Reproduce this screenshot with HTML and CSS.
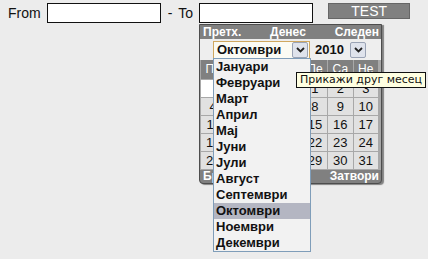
FILE: index.html
```html
<!DOCTYPE html>
<html>
<head>
    <title>Date range</title>
    <link rel="stylesheet" href="styles.css">
</head>
<body>
    <div class="range">
        <span class="lbl">From</span>
        <input type="text" class="field">
        <span class="dash">-</span>
        <span class="lbl">To</span>
        <input type="text" class="field">
        <button class="btn">TEST</button>
    </div>

    <div class="cal">
        <div class="cal-head">
            <span class="prev">Претх.</span>
            <span class="today">Денес</span>
            <span class="next">Следен</span>
        </div>
        <div class="cal-sel">
            <div class="sel sel-month">
                <span class="sel-text">Октомври</span>
                <span class="sel-arrow"><svg width="9" height="6" viewBox="0 0 9 6"><path d="M1 1l3.5 3.5L8 1" fill="none" stroke="#222" stroke-width="1.8"/></svg></span>
            </div>
            <div class="sel sel-year">
                <span class="sel-text">2010</span>
                <span class="sel-arrow"><svg width="9" height="6" viewBox="0 0 9 6"><path d="M1 1l3.5 3.5L8 1" fill="none" stroke="#222" stroke-width="1.8"/></svg></span>
            </div>
        </div>
        <div class="cal-grid">
            <div class="dn">По</div><div class="dn">Вт</div><div class="dn">Ср</div><div class="dn">Че</div><div class="dn">Пе</div><div class="dn">Са</div><div class="dn">Не</div>
            <div class="d empty"></div><div class="d empty"></div><div class="d empty"></div><div class="d empty"></div><div class="d">1</div><div class="d">2</div><div class="d">3</div>
            <div class="d">4</div><div class="d">5</div><div class="d">6</div><div class="d">7</div><div class="d">8</div><div class="d">9</div><div class="d">10</div>
            <div class="d">11</div><div class="d">12</div><div class="d">13</div><div class="d">14</div><div class="d">15</div><div class="d">16</div><div class="d">17</div>
            <div class="d">18</div><div class="d">19</div><div class="d">20</div><div class="d">21</div><div class="d">22</div><div class="d">23</div><div class="d">24</div>
            <div class="d">25</div><div class="d">26</div><div class="d">27</div><div class="d">28</div><div class="d">29</div><div class="d">30</div><div class="d">31</div>
        </div>
        <div class="cal-foot">
            <span>Бриши</span>
            <span>Затвори</span>
        </div>
    </div>

    <ul class="months">
        <li>Јануари</li>
        <li>Февруари</li>
        <li>Март</li>
        <li>Април</li>
        <li>Мај</li>
        <li>Јуни</li>
        <li>Јули</li>
        <li>Август</li>
        <li>Септември</li>
        <li class="cur">Октомври</li>
        <li>Ноември</li>
        <li>Декември</li>
    </ul>

    <div class="tip">Прикажи друг месец</div>
</body>
</html>
```

FILE: styles.css
```css
body {
    margin: 0;
    padding: 3px 8px;
    background: #ececec;
    font-family: "Liberation Sans", Arial, sans-serif;
    color: #111;
}
.range {
    display: flex;
    align-items: flex-start;
    height: 20px;
}
.lbl {
    font-size: 14px;
    line-height: 20px;
}
.field {
    box-sizing: border-box;
    width: 114px;
    height: 20px;
    margin: 0 0 0 5px;
    padding: 0;
    border: 1px solid #111;
    background: #fff;
}
.dash {
    font-size: 14px;
    line-height: 20px;
    margin: 0 6px 0 7px;
}
.range .lbl + .field {
    margin-left: 6px;
}
.btn {
    box-sizing: border-box;
    width: 82px;
    height: 16px;
    margin-left: 15px;
    padding: 0;
    border: 1px solid #666;
    background: #808080;
    color: #fff;
    font-family: "Liberation Sans", Arial, sans-serif;
    font-size: 14px;
    line-height: 14px;
}

/* calendar popup */
.cal {
    position: absolute;
    left: 199px;
    top: 24px;
    width: 181px;
    border: 1px solid #4d4d4d;
    border-radius: 0 0 4px 4px;
    background: #808080;
    box-shadow: 2px 1px 1px rgba(0,0,0,0.45);
}
.cal-head, .cal-foot {
    height: 14px;
    line-height: 14px;
    padding: 0 2px 0 3px;
    color: #fff;
    font-size: 12px;
    font-weight: bold;
}
.cal-head {
    display: grid;
    grid-template-columns: 67px auto 1fr;
}
.cal-head .next {
    text-align: right;
}
.cal-foot {
    display: flex;
    justify-content: space-between;
    height: 13px;
    line-height: 13px;
    border-radius: 0 0 4px 4px;
}
.cal-sel {
    display: flex;
    align-items: center;
    gap: 2px;
    height: 21px;
    padding-left: 13px;
    background: #eeeeee;
}
.sel {
    box-sizing: border-box;
    display: flex;
    align-items: center;
    height: 18px;
    font-size: 13px;
    font-weight: bold;
}
.sel-month {
    width: 97px;
    border: 1px solid #d0a860;
    background: #fbfbf4;
    padding-left: 3px;
}
.sel-year {
    width: 55px;
    padding-left: 3px;
}
.sel-text {
    flex: 1;
}
.sel-arrow {
    display: flex;
    align-items: center;
    justify-content: center;
    width: 14px;
    height: 14px;
    margin-right: 1px;
    border: 1px solid #9aa3b5;
    border-radius: 2px;
    background: #dfe3ec;
}
.cal-grid {
    display: grid;
    grid-template-columns: repeat(7, 1fr);
    grid-template-rows: 19px;
    grid-auto-rows: 17px;
    gap: 1px;
    padding: 0 3px 1px 1px;
    background: #a8a8a8;
}
.dn {
    background: #808080;
    color: #fff;
    font-size: 12px;
    text-align: center;
    line-height: 19px;
}
.d {
    background: #e1e1e1;
    font-size: 13px;
    text-align: center;
    line-height: 17px;
}
.d.empty {
    background: #fff;
}

/* opened month list */
.months {
    position: absolute;
    left: 213px;
    top: 58px;
    width: 96px;
    margin: 0;
    padding: 0;
    list-style: none;
    border: 1px solid #7f9db9;
    background: #f2f2f2;
}
.months li {
    height: 16px;
    line-height: 16px;
    padding-left: 2px;
    font-size: 13px;
    font-weight: bold;
    color: #111;
}
.months li.cur {
    background: #b4b6c2;
}

.tip {
    position: absolute;
    left: 296px;
    top: 72px;
    padding: 0 3px;
    height: 14px;
    line-height: 14px;
    border: 1px solid #111;
    background: #ffffe1;
    font-family: "DejaVu Sans", Verdana, sans-serif;
    font-size: 11px;
    white-space: nowrap;
}
```
